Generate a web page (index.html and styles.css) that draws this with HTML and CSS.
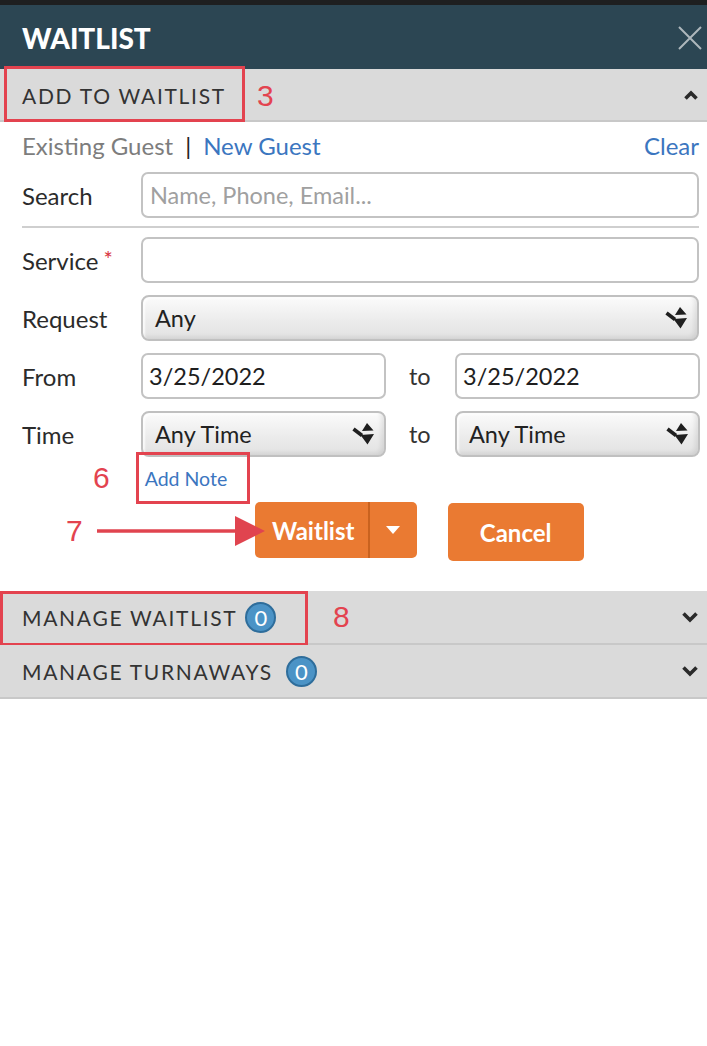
FILE: index.html
```html
<!DOCTYPE html>
<html>
<head>
<meta charset="utf-8">
<link rel="stylesheet" href="styles.css">
</head>
<body>
<div class="topstrip"></div>
<header class="header">
  <h1 class="title">WAITLIST</h1>
  <svg class="close" width="26" height="26" viewBox="0 0 26 26"><path d="M2 2 L24 24 M24 2 L2 24" stroke="#aeb7bc" stroke-width="2" fill="none"/></svg>
</header>

<div class="section-head">
  <span class="section-label">ADD TO WAITLIST</span>
  <span class="mark-box mark-add"></span>
  <span class="mark-num mark-num-3">3</span>
  <svg class="chev" width="16" height="12" viewBox="0 0 16 12"><path d="M2.5 9.5 L8 4 L13.5 9.5" stroke="#2a2a2a" stroke-width="3.6" fill="none"/></svg>
</div>

<div class="form">
  <div class="guest-row">
    <span class="existing">Existing Guest</span>
    <span class="pipe">|</span>
    <span class="link">New Guest</span>
    <span class="link clear">Clear</span>
  </div>

  <div class="row">
    <label class="lbl">Search</label>
    <div class="input placeholder">Name, Phone, Email...</div>
  </div>
  <div class="sep"></div>
  <div class="row">
    <label class="lbl">Service<span class="req">*</span></label>
    <div class="input"></div>
  </div>
  <div class="row">
    <label class="lbl">Request</label>
    <div class="select">Any<svg class="sel-arrow" width="22" height="22" viewBox="0 0 22 22"><path d="M15 0 L21.5 7.5 L10 8 Z M8.5 12 L22 11 L15.5 21.5 Z" fill="#1f1f1f"/><path d="M1.5 6 L10 12.5" stroke="#1f1f1f" stroke-width="3.6" fill="none"/></svg></div>
  </div>
  <div class="row">
    <label class="lbl">From</label>
    <div class="pair">
      <div class="input value">3/25/2022</div>
      <span class="to">to</span>
      <div class="input value">3/25/2022</div>
    </div>
  </div>
  <div class="row">
    <label class="lbl">Time</label>
    <div class="pair">
      <div class="select">Any Time<svg class="sel-arrow" width="22" height="22" viewBox="0 0 22 22"><path d="M15 0 L21.5 7.5 L10 8 Z M8.5 12 L22 11 L15.5 21.5 Z" fill="#1f1f1f"/><path d="M1.5 6 L10 12.5" stroke="#1f1f1f" stroke-width="3.6" fill="none"/></svg></div>
      <span class="to">to</span>
      <div class="select">Any Time<svg class="sel-arrow" width="22" height="22" viewBox="0 0 22 22"><path d="M15 0 L21.5 7.5 L10 8 Z M8.5 12 L22 11 L15.5 21.5 Z" fill="#1f1f1f"/><path d="M1.5 6 L10 12.5" stroke="#1f1f1f" stroke-width="3.6" fill="none"/></svg></div>
    </div>
  </div>

  <div class="note-row">
    <span class="num">6</span>
    <span class="note-box"><span class="link note">Add Note</span></span>
  </div>

  <div class="btn-row">
    <span class="num num-7">7</span>
    <svg class="arrow" width="168" height="32" viewBox="0 0 168 32"><path d="M0 16 H142" stroke="#e0444f" stroke-width="3.4"/><path d="M138 1 L168 16 L138 31 Z" fill="#e0444f"/></svg>
    <div class="split">
      <span class="split-main">Waitlist</span>
      <span class="split-caret"><svg width="14" height="8" viewBox="0 0 14 8"><path d="M0 0 H14 L7 8 Z" fill="#fff"/></svg></span>
    </div>
    <button class="cancel">Cancel</button>
  </div>
</div>

<div class="section-head manage">
  <span class="section-label">MANAGE WAITLIST</span>
  <span class="badge">0</span>
  <span class="mark-box mark-manage"></span>
  <span class="mark-num mark-num-8">8</span>
  <svg class="chev" width="18" height="12" viewBox="0 0 18 12"><path d="M2.5 2.5 L9 9 L15.5 2.5" stroke="#2a2a2a" stroke-width="3.6" fill="none"/></svg>
</div>
<div class="section-head manage">
  <span class="section-label">MANAGE TURNAWAYS</span>
  <span class="badge badge-gap">0</span>
  <svg class="chev" width="18" height="12" viewBox="0 0 18 12"><path d="M2.5 2.5 L9 9 L15.5 2.5" stroke="#2a2a2a" stroke-width="3.6" fill="none"/></svg>
</div>
</body>
</html>
```

FILE: styles.css
```css
* { box-sizing: border-box; }
body {
  margin: 0;
  background: #fff;
  font-family: Lato, "Open Sans", sans-serif;
  color: #333;
  width: 707px;
}
.topstrip {
  height: 5px;
  background: #1e1f20;
}
.header {
  height: 64px;
  background: #2c4653;
  display: flex;
  align-items: center;
  justify-content: space-between;
  padding: 0 4px 0 22px;
}
.title {
  margin: 0;
  font-size: 28px;
  font-weight: 900;
  color: #fff;
  padding-top: 2px;
}
.close { margin-top: 1px; }

.section-head {
  position: relative;
  height: 53px;
  background: #dadada;
  border-bottom: 2px solid #c8c8c8;
  display: flex;
  align-items: center;
  padding: 0 8px 0 22px;
}
.section-label {
  font-size: 21px;
  letter-spacing: 1.7px;
  color: #333;
  padding-top: 1px;
}
.chev { margin-left: auto; }
.mark-box {
  position: absolute;
  border: 3px solid #e3434f;
}
.mark-add { left: 4px; top: -3px; width: 241px; height: 56px; }
.mark-manage { left: 0; top: 0; width: 308px; height: 55px; }
.mark-num {
  position: absolute;
  color: #e3434f;
  font-family: "Liberation Sans", Arial, sans-serif;
  font-size: 30px;
  line-height: 1;
}
.mark-num-3 { left: 257px; top: 12px; }
.mark-num-8 { left: 333px; top: 11px; }

.form {
  padding: 8px 8px 30px 22px;
}
.guest-row {
  display: flex;
  align-items: center;
  font-size: 24px;
  height: 30px;
  margin-bottom: 12px;
}
.existing { color: #7d7d7d; }
.pipe { color: #222; margin: 0 12px 0 12px; }
.link { color: #3b76bf; }
.clear { margin-left: auto; }

.row {
  display: flex;
  align-items: center;
  height: 46px;
  margin-bottom: 12px;
}
.lbl {
  width: 119px;
  flex: none;
  font-size: 24px;
  color: #2b2b2b;
}
.req { color: #d8323c; font-size: 22px; margin-left: 5px; vertical-align: 3px; }
.sep {
  height: 2px;
  background: #cfcfcf;
  margin: -4px 0 9px 0;
}
.input {
  flex: 1;
  height: 46px;
  border: 2px solid #c3c3c3;
  border-radius: 7px;
  background: #fff;
  display: flex;
  align-items: center;
  padding-left: 6px;
  font-size: 23.5px;
  color: #1e1e1e;
}
.placeholder { color: #a0a0a0; padding-left: 7px; }
.select {
  flex: 1;
  height: 46px;
  border: 2px solid #c0c0c0;
  border-radius: 8px;
  background: linear-gradient(#fbfbfb, #ececec 55%, #e2e2e2);
  box-shadow: inset -3px -2px 4px rgba(0,0,0,0.08), inset 2px 2px 2px rgba(255,255,255,0.8);
  display: flex;
  align-items: center;
  padding: 0 10px 0 12px;
  font-size: 23.5px;
  color: #222;
}
.sel-arrow { margin-left: auto; }
.pair {
  flex: 1;
  display: flex;
  align-items: center;
}
.pair .input, .pair .select { flex: none; width: 245px; }
.to {
  width: 69px;
  padding-left: 23px;
  font-size: 23.5px;
  color: #333;
}

.note-row {
  display: flex;
  align-items: center;
  margin-top: -17px;
  padding-left: 71px;
}
.num {
  color: #e3434f;
  font-family: "Liberation Sans", Arial, sans-serif;
  font-size: 30px;
  line-height: 34px;
}
.note-box {
  margin-left: 26px;
  width: 114px;
  height: 52px;
  border: 3px solid #e3434f;
  display: flex;
  align-items: center;
  padding-left: 6px;
}
.note { font-size: 19.5px; }

.btn-row {
  display: flex;
  align-items: flex-start;
  margin-top: -2px;
  padding-left: 44px;
}
.num-7 { margin-top: 12px; }
.arrow { margin-left: 14px; margin-right: -10px; margin-top: 13px; position: relative; z-index: 1; }
.split {
  display: flex;
  height: 56px;
  width: 162px;
  background: #ea7a32;
  border-radius: 5px;
  color: #fff;
}
.split-main {
  width: 115px;
  display: flex;
  align-items: center;
  justify-content: center;
  font-size: 24px;
  font-weight: 700;
  border-right: 2px solid #c9621f;
  padding-left: 4px;
}
.split-caret {
  flex: 1;
  display: flex;
  align-items: center;
  justify-content: center;
}
.cancel {
  margin-left: 31px;
  width: 136px;
  height: 58px;
  margin-top: 1px;
  border: none;
  border-radius: 5px;
  background: #ea7a32;
  color: #fff;
  font-family: Lato, sans-serif;
  font-size: 24px;
  font-weight: 700;
}

.manage { height: 54px; }
.badge {
  margin-left: 8px;
  width: 31px;
  height: 31px;
  border-radius: 50%;
  background: #4b93c6;
  border: 2px solid #2e6d9b;
  color: #fff;
  font-size: 22px;
  display: flex;
  align-items: center;
  justify-content: center;
}
.badge-gap { margin-left: 13px; }
```
